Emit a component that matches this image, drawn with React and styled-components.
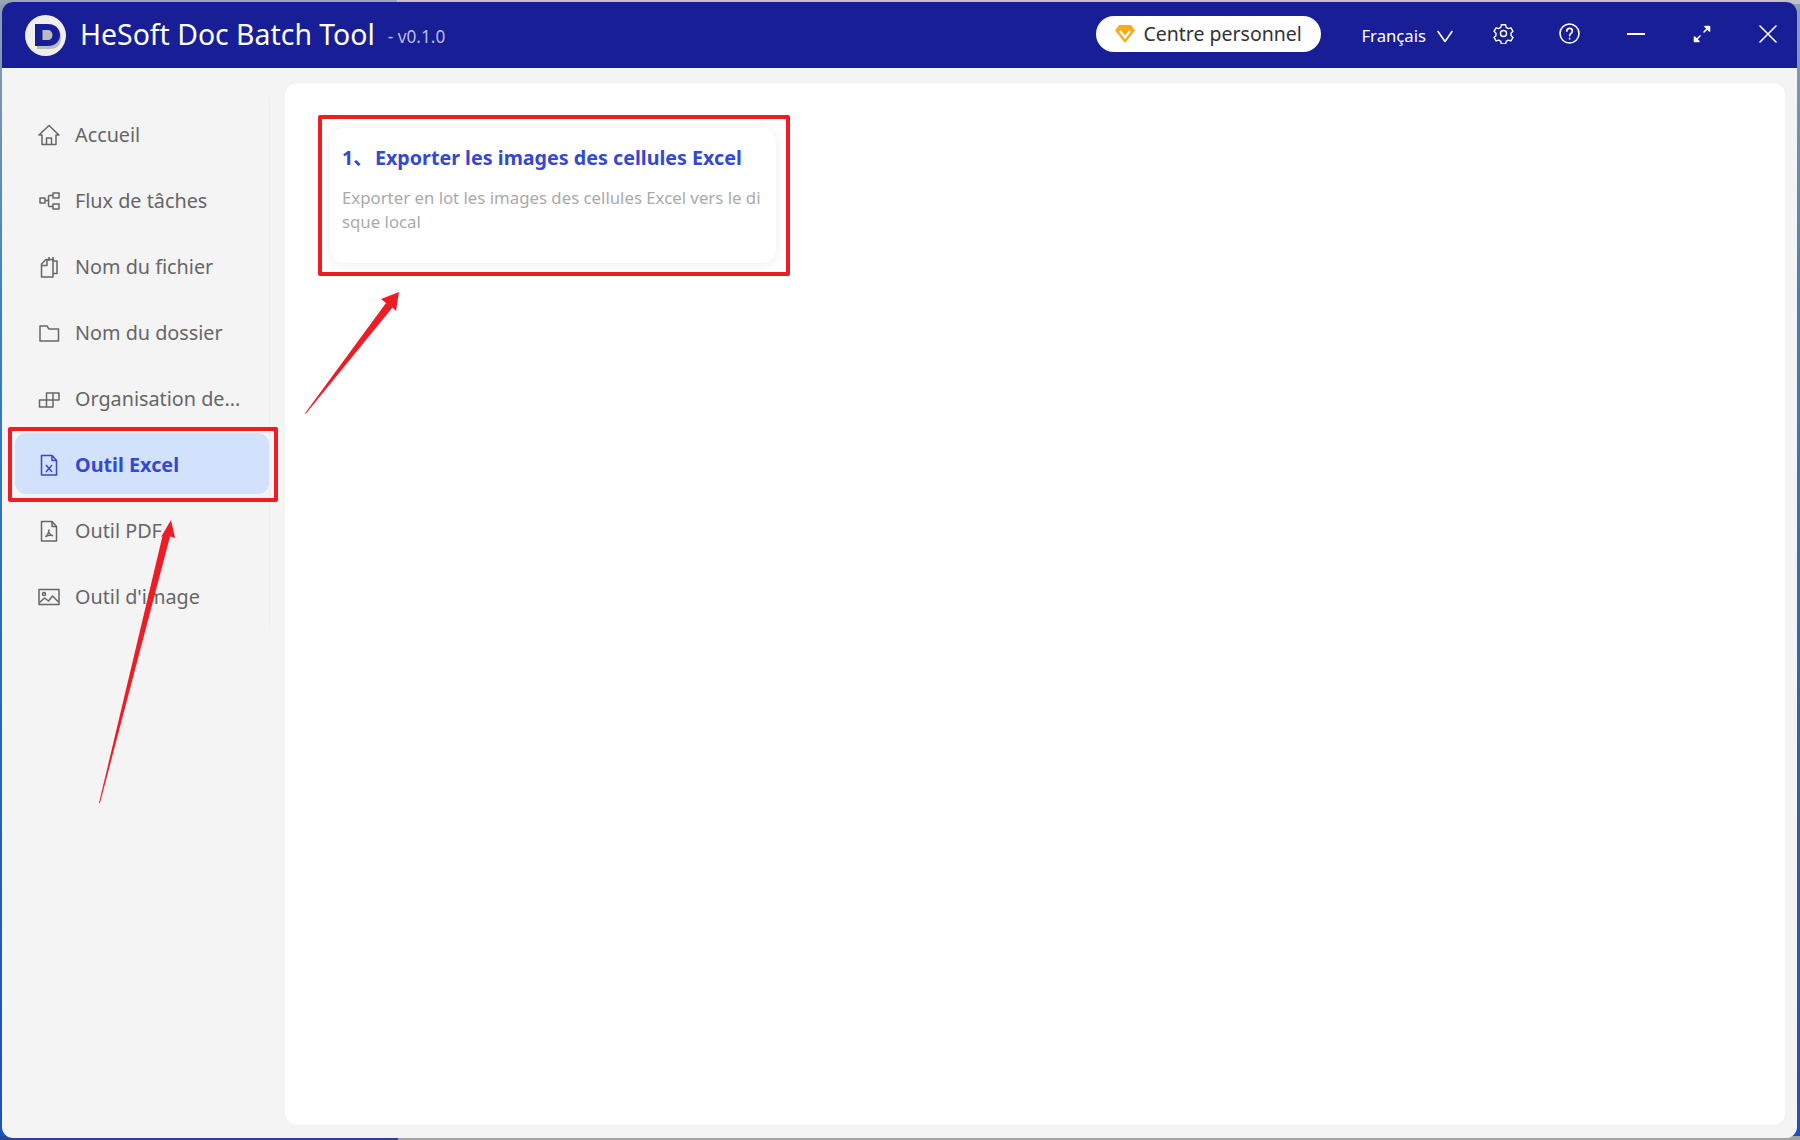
import React from 'react';
import styled, { createGlobalStyle } from 'styled-components';

const FONT = `"Noto Sans", "Open Sans", "Noto Sans CJK SC", sans-serif`;

const Global = createGlobalStyle`
  html, body { margin: 0; padding: 0; }
  body { font-family: ${FONT}; }
  * { box-sizing: border-box; }
`;

const Desktop = styled.div`
  position: relative;
  width: 1800px;
  height: 1140px;
  padding: 2px 3px 2px 2px;
  overflow: hidden;
  background:
    linear-gradient(90deg, #26459c 0 398px, #a3a3a3 398px 100%) bottom / 100% 4px no-repeat,
    linear-gradient(90deg, #9aa6b8 0 397px, #c4c0c4 397px 100%) top / 100% 4px no-repeat,
    linear-gradient(180deg, #8e9fb4 0, #3f82bd 300px, #2a6db5 620px, #1d52b8 1140px);
`;

const Win = styled.div`
  display: flex;
  flex-direction: column;
  height: 100%;
  border-radius: 11px;
  overflow: hidden;
  background: #f4f4f4;
`;

const Header = styled.header`
  display: flex;
  align-items: center;
  flex: 0 0 66px;
  height: 66px;
  padding-left: 23px;
  background: #171e96;
  color: #fff;
`;

const Logo = styled.svg`
  width: 41px;
  height: 41px;
  flex: none;
`;

const Title = styled.span`
  margin-left: 14px;
  font-size: 28.4px;
  line-height: 1;
  margin-top: -1px;
`;

const Version = styled.span`
  margin-left: 13px;
  padding-top: 2px;
  font-size: 17.2px;
  color: #b9bddd;
`;

const Spacer = styled.div`
  flex: ${(p) => p.$basis || '1'};
`;

const Pill = styled.div`
  display: flex;
  align-items: center;
  width: 225px;
  height: 36px;
  margin-top: -3px;
  padding-left: 19px;
  border-radius: 18px;
  background: #fff;
  color: #333;
  font-size: 19.5px;
`;

const PillText = styled.span`
  margin-left: 8px;
`;

const Lang = styled.div`
  display: flex;
  align-items: center;
  margin-left: 40px;
  font-size: 16.7px;
  color: #fff;
`;

const HeadIcon = styled.svg`
  display: block;
  flex: none;
  fill: none;
  stroke: #fff;
  stroke-width: 1.6;
  stroke-linecap: round;
  stroke-linejoin: round;
  width: ${(p) => p.$size}px;
  height: ${(p) => p.$size}px;
  margin-left: ${(p) => p.$gap}px;
  margin-top: ${(p) => p.$top ?? -3}px;
`;

const Body = styled.div`
  flex: 1;
  display: flex;
  min-height: 0;
`;

const Sidebar = styled.aside`
  flex: 0 0 283px;
  padding-left: 13px;
`;

const Nav = styled.nav`
  display: flex;
  flex-direction: column;
  gap: 5px;
  width: 255px;
  margin-top: 29px;
  padding: 6px 0 2px;
  border-right: 1px solid #eeeeee;
`;

const Item = styled.div`
  display: flex;
  align-items: center;
  height: 61px;
  padding: 2px 0 0 23px;
  border-radius: 11px;
  background: ${(p) => (p.$active ? '#d2e2fc' : 'transparent')};
  color: ${(p) => (p.$active ? '#3548d0' : '#666')};
  font-size: 19.8px;
  font-weight: ${(p) => (p.$active ? 700 : 400)};
`;

const NavIcon = styled.svg`
  flex: none;
  width: 22px;
  height: 22px;
  fill: none;
  stroke: currentColor;
  stroke-width: 1.5;
  stroke-linejoin: round;
`;

const Label = styled.span`
  margin-left: 15px;
  white-space: nowrap;
`;

const Main = styled.main`
  flex: 1;
  margin: 15px 12px 13px 0;
  padding: 45px;
  border-radius: 12px;
  background: #fff;
`;

const Card = styled.section`
  width: 446px;
  height: 135px;
  padding: 13px 12px;
  border-radius: 14px;
  background: #fff;
  box-shadow: 0 1px 12px rgba(0, 0, 0, 0.08);
`;

const CardTitle = styled.h3`
  margin: 0;
  font-size: 19.7px;
  line-height: 34px;
  font-weight: 700;
  color: #3548d0;
  white-space: nowrap;
  font-family: "Noto Sans", "Noto Sans CJK SC", sans-serif;
`;

const Num = styled.span`
  margin-right: 2px;
`;

const CardDesc = styled.p`
  margin: 11px 0 0;
  font-size: 16.8px;
  line-height: 24px;
  color: #aaaaaa;
  word-break: break-all;
`;

const RedBox = styled.div`
  position: absolute;
  left: ${(p) => p.$x}px;
  top: ${(p) => p.$y}px;
  width: ${(p) => p.$w}px;
  height: ${(p) => p.$h}px;
  border: 4px solid #ee1c25;
  border-radius: 2px;
  pointer-events: none;
`;

const Arrow = styled.svg`
  position: absolute;
  left: 0;
  top: 0;
  width: 1800px;
  height: 1140px;
  pointer-events: none;
`;

const docOutline = (
  <>
    <path d="M3.500 1.500h10.500l4.500 5v14.500h-15z" />
    <path d="M14 1.500v5h4.500" />
  </>
);

const items = [
  {
    label: 'Accueil',
    icon: (
      <>
        <path d="M11 1.500 1 11h3v9.500h14V11h3z" />
        <path d="M8.500 20.500V14h5v6.500" />
      </>
    ),
  },
  {
    label: 'Flux de tâches',
    icon: (
      <>
        <rect x="2" y="8" width="5" height="5" />
        <rect x="15" y="3" width="6" height="5" />
        <rect x="15" y="14" width="6" height="5" />
        <path d="M7 10.500h3.500M10.500 5.500v11M10.500 5.500H15M10.500 16.500H15" />
      </>
    ),
  },
  {
    label: 'Nom du fichier',
    icon: (
      <>
        <path d="M3.500 8 8 3.500h7V21H3.500z" />
        <path d="M3.500 9.500H9V3.500" />
        <path d="M15 5h4v12.500h-4" />
        <path d="M11 1v4M15 1v4" />
      </>
    ),
  },
  {
    label: 'Nom du dossier',
    icon: <path d="M2 4h7l2 3h9.500v12H2z" />,
  },
  {
    label: 'Organisation de...',
    icon: (
      <>
        <path d="M1.500 12h7v7h-7zM8.500 12h6.500v7H8.500z" />
        <path d="M8.500 12V5H15v7M15 5h6v7h-6" />
      </>
    ),
  },
  {
    label: 'Outil Excel',
    active: true,
    icon: (
      <>
        {docOutline}
        <path d="M8 11l6 7M14 11l-6 7" />
      </>
    ),
  },
  {
    label: 'Outil PDF',
    icon: (
      <>
        {docOutline}
        <path d="M11 9.500c0 3-2 6.500-3.500 7.500M11 12.500c1 2 2.500 3 4 3.500M7.500 16.500c2.500-1.200 5-1.500 7.500-1" />
      </>
    ),
  },
  {
    label: "Outil d'image",
    icon: (
      <>
        <rect x="1" y="3.500" width="20" height="15" />
        <circle cx="6" cy="8" r="1.500" />
        <path d="M1.500 16.500l5-4.500 4 3 4-5 6 6" />
      </>
    ),
  },
];

export default function App() {
  return (
    <Desktop>
      <Global />
      <Win>
        <Header>
          <Logo viewBox="0 0 41 41">
            <circle cx="20.500" cy="20.500" r="20.500" fill="#efefef" />
            <path d="M12 12h13c7 0 11 4 11 11 0 7-4 11-11 11H12z" fill="#a5a5a5" opacity="0.7" />
            <path
              fillRule="evenodd"
              d="M10 9h13c7 0 12 4.500 12 11s-5 11-12 11H10zM17.500 15v10h5.500c2.500 0 4.500-2 4.500-5s-2-5-4.500-5z"
              fill="#171e96"
            />
          </Logo>
          <Title>HeSoft Doc Batch Tool</Title>
          <Version>- v0.1.0</Version>
          <Spacer />
          <Pill>
            <svg width="20" height="18" viewBox="0 0 20 18">
              <path d="M4 0h12l4 5.500L10 18 0 5.500z" fill="#f6ad1c" />
              <path d="M5 6l5 6.500L15 6" fill="none" stroke="#fff" strokeWidth="2.200" />
            </svg>
            <PillText>Centre personnel</PillText>
          </Pill>
          <Lang>
            Français
            <HeadIcon $size={16} $gap={11} $top={2} viewBox="0 0 16 16">
              <path d="M1 3.500l7 10 7-10" />
            </HeadIcon>
          </Lang>
          <HeadIcon $size={21} $gap={40} viewBox="0 0 24 24">
            <path d="M9.600 2h4.800l.7 3 2.400 1.400 3-.9 2.300 4-2.200 2.100v2.800l2.200 2.100-2.300 4-3-.9-2.400 1.400-.7 3H9.600l-.7-3-2.400-1.400-3 .9-2.300-4 2.200-2.100v-2.800L1.200 9.500l2.300-4 3 .9 2.400-1.400z" />
            <circle cx="12" cy="12" r="3.500" />
          </HeadIcon>
          <HeadIcon $size={21} $gap={45} viewBox="0 0 21 21">
            <circle cx="10.500" cy="10.500" r="9.500" />
            <path d="M7.800 8.200c0-1.700 1.200-2.800 2.800-2.800s2.800 1.100 2.800 2.600c0 2.300-2.800 2.300-2.800 4.700" />
            <path d="M10.600 15.300v.6" />
          </HeadIcon>
          <HeadIcon $size={18} $gap={47} viewBox="0 0 18 18">
            <path d="M0.500 9h17" strokeWidth="2" />
          </HeadIcon>
          <HeadIcon $size={18} $gap={48} viewBox="0 0 18 18">
            <path d="M2 16 7 11M11 7l5-5" />
            <path d="M12 1.500h4.500V6z" fill="#fff" />
            <path d="M1.500 12v4.500H6z" fill="#fff" />
          </HeadIcon>
          <HeadIcon $size={18} $gap={48} viewBox="0 0 18 18">
            <path d="M1 1l16 16M17 1 1 17" />
          </HeadIcon>
          <Spacer $basis="0 0 20px" />
        </Header>
        <Body>
          <Sidebar>
            <Nav>
              {items.map((it) => (
                <Item key={it.label} $active={it.active}>
                  <NavIcon viewBox="0 0 22 22">{it.icon}</NavIcon>
                  <Label>{it.label}</Label>
                </Item>
              ))}
            </Nav>
          </Sidebar>
          <Main>
            <Card>
              <CardTitle><Num>1、</Num>Exporter les images des cellules Excel</CardTitle>
              <CardDesc>Exporter en lot les images des cellules Excel vers le disque local</CardDesc>
            </Card>
          </Main>
        </Body>
      </Win>
      <RedBox $x={8} $y={427} $w={270} $h={75} />
      <RedBox $x={318} $y={115} $w={472} $h={161} />
      <Arrow viewBox="0 0 1800 1140">
        <polygon points="304.500,414 386,303 381,299 399,292 396,311 392.500,307.500 306,413.500" fill="#ee1c25" />
        <polygon points="99,803 162.500,536 161,537 171,520 175,538 170,536.500 100,803" fill="#ee1c25" />
      </Arrow>
    </Desktop>
  );
}
